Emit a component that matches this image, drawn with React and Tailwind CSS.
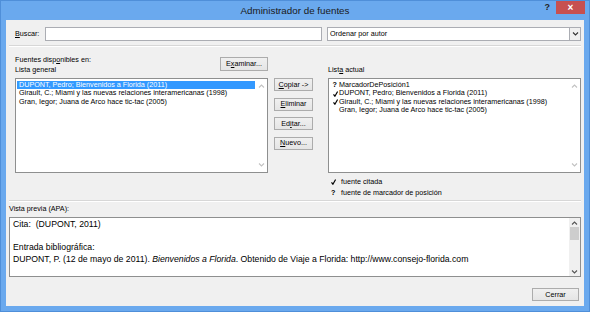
import React from 'react';

const leftItems = [
  'DUPONT, Pedro; Bienvenidos a Florida (2011)',
  'Girault, C.; Miami y las nuevas relaciones interamericanas (1998)',
  'Gran, Iegor; Juana de Arco hace tic-tac (2005)',
];

const rightItems = [
  { mark: '?', text: 'MarcadorDePosición1' },
  { mark: 'check', text: 'DUPONT, Pedro; Bienvenidos a Florida (2011)' },
  { mark: 'check', text: 'Girault, C.; Miami y las nuevas relaciones interamericanas (1998)' },
  { mark: '', text: 'Gran, Iegor; Juana de Arco hace tic-tac (2005)' },
];

const Chevron = ({ up, color = '#c2c2c2' }) => (
  <svg width="7" height="4" viewBox="0 0 7 4">
    <path
      d={up ? 'M1 3.5L3.5 1L6 3.5' : 'M1 0.5L3.5 3L6 0.5'}
      fill="none"
      stroke={color}
      strokeWidth="1.1"
    />
  </svg>
);

const Check = () => (
  <svg width="5" height="6" viewBox="0 0 5 6">
    <path d="M0.5 3.4L1.9 5.2L4.6 0.6" fill="none" stroke="#000" strokeWidth="1.2" />
  </svg>
);

const Mark = ({ mark }) => {
  if (mark === 'check') return <Check />;
  if (mark === '?') return <span className="font-bold">?</span>;
  return null;
};

const Btn = ({ children, className = '' }) => (
  <button
    className={`flex items-center justify-center border border-[#acacac] bg-gradient-to-b from-[#f0f0f0] to-[#e5e5e5] text-[7.2px] leading-none text-black ${className}`}
  >
    {children}
  </button>
);

// list box with the (disabled) scroll arrows on the right
const ListBox = ({ children }) => (
  <div className="flex h-[95px] border border-[#8e8f8f] bg-white">
    <div className="flex-1 pl-[0.5px] pt-[2px]">{children}</div>
    <div className="flex w-[11px] flex-col items-center justify-between pb-[5px] pt-[5px]">
      <Chevron up />
      <Chevron />
    </div>
  </div>
);

const App = () => {
  return (
    <div className="h-[312px] w-[590px] overflow-hidden border border-[#4f8fd9] bg-[#6aa9ee] font-['Liberation_Sans',Arial,sans-serif] text-black">
      {/* title bar */}
      <div className="grid h-[19px] grid-cols-[50px_1fr_50px]">
        <div />
        <div className="pt-[4px] text-center text-[9.8px] leading-[12px] text-[#1a1a1a]">
          Administrador de fuentes
        </div>
        <div className="flex items-start justify-end pr-[4px]">
          <span className="mr-[6px] mt-[1px] text-[9px] font-bold leading-[11px] text-[#222]">?</span>
          <div className="flex h-[13px] w-[29px] items-center justify-center bg-[#c75050] text-[10px] font-bold leading-none text-white">
            ×
          </div>
        </div>
      </div>

      {/* client area */}
      <div className="mx-[5px] flex h-[286px] flex-col bg-[#f0f0f0] pl-[3px] pr-[3px]">
        <div className="mt-[7px] flex h-[14px] items-center">
          <label className="w-[36px] pl-[6px] text-[7.2px] leading-none">
            <u>B</u>uscar:
          </label>
          <div className="h-[14px] w-[277px] border border-[#abadb3] bg-white" />
          <div className="ml-[5px] flex h-[14px] flex-1 items-center border border-[#abadb3] bg-white">
            <span className="flex-1 pl-[2px] text-[7.2px] leading-none">Ordenar por autor</span>
            <span className="flex h-[12px] w-[11px] items-center justify-center border-l border-[#abadb3] bg-[#f0f0f0]">
              <Chevron color="#333" />
            </span>
          </div>
        </div>

        <div className="mt-[4px] h-0 border-b border-t border-b-white border-t-[#d7d7d7]" />

        {/* lists */}
        <div className="flex pl-[6px]">
          <div className="w-[253px]">
            <div className="flex h-[31px] justify-between">
              <div className="pt-[8px] text-[7.2px] leading-[10px]">
                <div>
                  Fuentes disp<u>o</u>nibles en:
                </div>
                <div>Lista general</div>
              </div>
              <Btn className="mt-[10px] h-[14px] w-[48px]">
                <span>
                  E<u>x</u>aminar...
                </span>
              </Btn>
            </div>
            <ListBox>
              {leftItems.map((item, i) => (
                <div
                  key={item}
                  className={`h-[8.35px] whitespace-nowrap pl-[2.5px] text-[7.2px] leading-[8.35px] ${
                    i === 0 ? 'mr-[1px] bg-[#3399ff] text-white' : ''
                  }`}
                >
                  {item}
                </div>
              ))}
            </ListBox>
          </div>

          <div className="ml-[6px] flex w-[39px] flex-col gap-[6.5px] pt-[31px]">
            <Btn className="h-[13px]">
              <span>
                <u>C</u>opiar -&gt;
              </span>
            </Btn>
            <Btn className="h-[13px]">
              <span>
                <u>E</u>liminar
              </span>
            </Btn>
            <Btn className="h-[13px]">
              <span>
                Ed<u>i</u>tar...
              </span>
            </Btn>
            <Btn className="h-[13px]">
              <span>
                <u>N</u>uevo...
              </span>
            </Btn>
          </div>

          <div className="ml-[15px] w-[253px]">
            <div className="h-[31px] pt-[18px] text-[7.2px] leading-[10px]">
              List<u>a</u> actual
            </div>
            <ListBox>
              {rightItems.map((item) => (
                <div key={item.text} className="flex h-[8.35px] items-center whitespace-nowrap pl-[3px] text-[7.2px] leading-[8.35px]">
                  <span className="flex w-[6.5px] shrink-0 items-center">
                    <Mark mark={item.mark} />
                  </span>
                  {item.text}
                </div>
              ))}
            </ListBox>
            <div className="pt-[4px] text-[7.2px] leading-[10.5px]">
              <div className="flex items-center pl-[3px]">
                <span className="flex w-[10px] items-center">
                  <Check />
                </span>
                fuente citada
              </div>
              <div className="flex items-center pl-[3px]">
                <span className="w-[10px] font-bold">?</span>
                fuente de marcador de posición
              </div>
            </div>
          </div>
        </div>

        <div className="mt-[2px] h-0 border-b border-t border-b-white border-t-[#d7d7d7]" />

        <div className="mt-[2px] text-[7.2px] leading-[10px]">Vista previa (APA):</div>

        <div className="mt-[3px] flex h-[60px] border border-[#8e8f8f] bg-white">
          <div className="flex-1 pl-[3px] pt-[1px] text-[8.7px] leading-[11.5px]">
            <div className="whitespace-pre">Cita:  (DUPONT, 2011)</div>
            <div>&nbsp;</div>
            <div>Entrada bibliográfica:</div>
            <div className="whitespace-nowrap">
              DUPONT, P. (12 de mayo de 2011). <i>Bienvenidos a Florida</i>. Obtenido de Viaje a Florida:
              http://www.consejo-florida.com
            </div>
          </div>
          <div className="flex w-[11px] flex-col bg-[#f0f0f0]">
            <div className="flex h-[9px] items-center justify-center">
              <Chevron up color="#555" />
            </div>
            <div className="mx-[1px] h-[13px] bg-[#cdcdcd]" />
            <div className="flex-1" />
            <div className="flex h-[9px] items-center justify-center">
              <Chevron color="#555" />
            </div>
          </div>
        </div>

        <div className="mt-[11px] flex justify-end pr-[2px]">
          <Btn className="h-[13px] w-[47px]">Cerrar</Btn>
        </div>
      </div>
    </div>
  );
};

export default App;
